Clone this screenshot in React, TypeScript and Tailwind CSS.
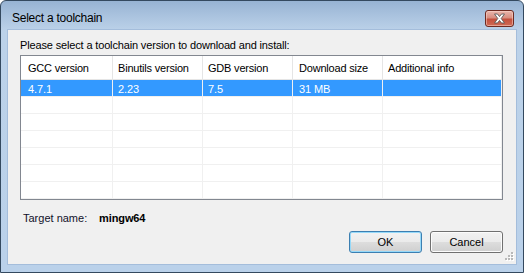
export default function App() {
  const cols = [
    { label: "GCC version", w: "w-[92px]", pl: "pl-[7px]" },
    { label: "Binutils version", w: "w-[90px]", pl: "pl-[5px]" },
    { label: "GDB version", w: "w-[90px]", pl: "pl-[5px]" },
    { label: "Download size", w: "w-[90px]", pl: "pl-[6px]" },
    { label: "Additional info", w: "flex-1", pl: "pl-[5px]" },
  ];
  const selected = ["4.7.1", "2.23", "7.5", "31 MB", ""];
  const empty = [0, 1, 2, 3, 4, 5];

  return (
    <div className="w-[524px] h-[273px] font-['Liberation_Sans',Arial,sans-serif] text-[11px] text-black">
      <div className="w-full h-full border border-[#34495f] rounded-t-[6px] flex flex-col overflow-hidden bg-[linear-gradient(to_bottom,#97b3d3_0px,#a9c2de_14px,#bcd2e9_30px,#bad1ea_100%)]">
        {/* title bar */}
        <div className="h-[29px] shrink-0 flex items-start">
          <div className="mt-[10px] ml-[11px] leading-[14px] text-[12px] tracking-[-0.25px] text-[#000]">
            Select a toolchain
          </div>
          <div className="ml-auto mr-[9px] mt-[9px] w-[29px] h-[17px] rounded-[3px] border border-[#6e2a21] bg-[linear-gradient(to_bottom,#e9b6ac_0%,#d88e80_45%,#c4503d_55%,#cf6a55_100%)] flex items-center justify-center shadow-[inset_0_0_0_1px_rgba(255,220,210,0.5)]">
            <svg width="13" height="11" viewBox="0 0 13 11">
              <path
                d="M1.5 1 L4.5 1 L6.5 3.6 L8.5 1 L11.5 1 L8.2 5.5 L11.5 10 L8.5 10 L6.5 7.4 L4.5 10 L1.5 10 L4.8 5.5 Z"
                fill="#ffffff"
                stroke="#5a5a5a"
                strokeWidth="0.9"
                strokeLinejoin="round"
              />
            </svg>
          </div>
        </div>

        {/* client area */}
        <div className="relative mx-[7px] h-[234px] shrink-0 bg-[#f0f0f0] pl-[12px] pr-[13px] flex flex-col shadow-[0_0_0_1px_#a4bddb]">
          <div className="mt-[8px] h-[14px] leading-[14px] tracking-[-0.15px]">
            Please select a toolchain version to download and install:
          </div>

          {/* list view */}
          <div className="mt-[3px] w-[483px] border border-[#828790] bg-white flex flex-col">
            <div className="h-[24px] flex border-b border-[#e5e5e5]">
              {cols.map((c, i) => (
                <div
                  key={i}
                  className={`${c.w} ${c.pl} h-full flex items-center pt-[1px] border-r border-[#e5e5e5] tracking-[-0.2px] whitespace-nowrap`}
                >
                  {c.label}
                </div>
              ))}
            </div>
            <div className="h-[17px] flex border-b border-[#f0f0f0] bg-[#3399ff] text-white">
              {cols.map((c, i) => (
                <div
                  key={i}
                  className={`${c.w} ${c.pl} h-full flex items-center pt-[2px] border-r border-[#f0f0f0] tracking-[-0.1px]`}
                >
                  {selected[i]}
                </div>
              ))}
            </div>
            {empty.map((r) => (
              <div key={r} className="h-[17px] flex border-b border-[#f0f0f0]">
                {cols.map((c, i) => (
                  <div key={i} className={`${c.w} h-full border-r border-[#f0f0f0]`} />
                ))}
              </div>
            ))}
          </div>

          {/* target name */}
          <div className="mt-[11px] h-[14px] leading-[14px] flex pl-[3px]">
            <span className="w-[76px] text-[#10102a]">Target name:</span>
            <span className="font-bold tracking-[-0.1px]">mingw64</span>
          </div>

          {/* buttons */}
          <div className="mt-[6px] flex justify-end gap-[8px]">
            <button className="w-[73px] h-[22px] rounded-[3px] border border-[#3c7fb1] shadow-[inset_0_0_0_1px_#96d9f9] bg-[linear-gradient(to_bottom,#f2f2f2_0%,#ebebeb_48%,#dddddd_52%,#cfcfcf_100%)] text-[11px] leading-[20px] text-black">
              OK
            </button>
            <button className="w-[73px] h-[22px] rounded-[3px] border border-[#707070] shadow-[inset_0_0_0_1px_#fcfcfc] bg-[linear-gradient(to_bottom,#f2f2f2_0%,#ebebeb_48%,#dddddd_52%,#cfcfcf_100%)] text-[11px] leading-[20px] text-black">
              Cancel
            </button>
          </div>

          {/* size grip */}
          <svg className="absolute right-[2px] bottom-[1px]" width="11" height="11" viewBox="0 0 11 11">
            {[
              [8, 0],
              [8, 3],
              [5, 3],
              [8, 6],
              [5, 6],
              [2, 6],
            ].map(([x, y], i) => (
              <g key={i}>
                <rect x={x + 1} y={y + 1} width="2" height="2" fill="#ffffff" />
                <rect x={x} y={y} width="2" height="2" fill="#b8b8b8" />
              </g>
            ))}
          </svg>
        </div>
      </div>
    </div>
  );
}
